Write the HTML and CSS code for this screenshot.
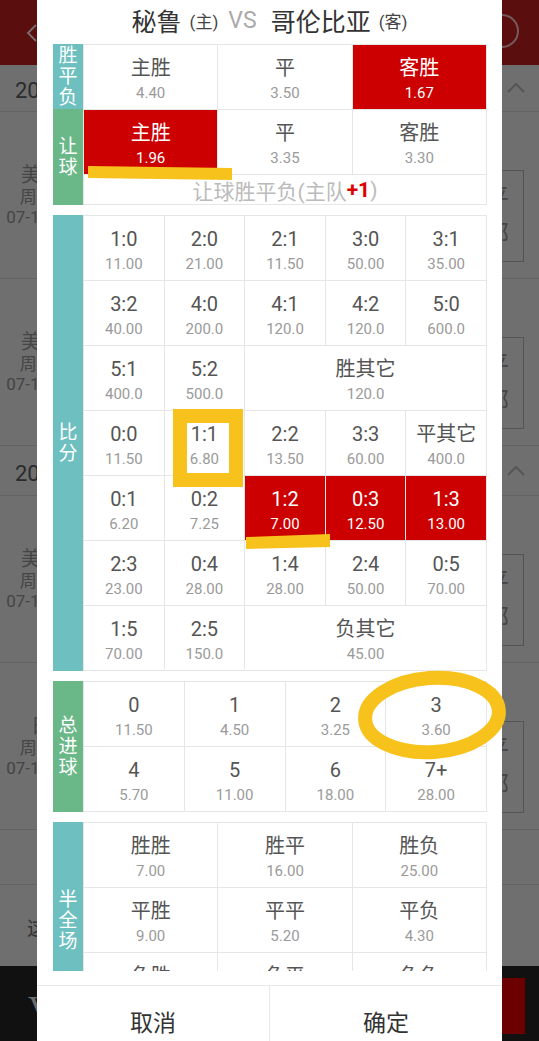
FILE: index.html
```html
<!DOCTYPE html>
<html lang="zh-CN">
<head>
  <meta charset="UTF-8" />
  <meta name="viewport" content="width=device-width, initial-scale=1.0"/>
  <title>投注选项</title>
  <link rel="stylesheet" href="styles.css">
</head>
<body>
  <div class="screen">
    <!-- page behind the dialog -->
    <div class="app">
      <div class="topbar">
        <svg class="back" width="12" height="18" viewBox="0 0 12 18"><path d="M10 1 L2 9 L10 17" fill="none" stroke="#f3d6d6" stroke-width="2"/></svg>
        <span class="top-circle"></span>
      </div>
      <div class="group">
        <span>2018-07-13 星期五 4场比赛可投</span>
        <svg width="18" height="10" viewBox="0 0 18 10"><path d="M1 9 L9 1 L17 9" fill="none" stroke="#aaa" stroke-width="2"/></svg>
      </div>
      <div class="match">
        <div class="info"><span class="lg">美职足</span><span>周五001</span><span>07-14 08:00</span></div>
        <div class="more">平<br>部</div>
      </div>
      <div class="match">
        <div class="info"><span class="lg">美职足</span><span>周五002</span><span>07-14 09:30</span></div>
        <div class="more">平<br>部</div>
      </div>
      <div class="group short">
        <span>2018-07-14 星期六 6场比赛可投</span>
        <svg width="18" height="10" viewBox="0 0 18 10"><path d="M1 9 L9 1 L17 9" fill="none" stroke="#aaa" stroke-width="2"/></svg>
      </div>
      <div class="match">
        <div class="info"><span class="lg">美职足</span><span>周六001</span><span>07-15 07:30</span></div>
        <div class="more">平<br>部</div>
      </div>
      <div class="match">
        <div class="info"><span class="lg">日职</span><span>周六002</span><span>07-15 18:00</span></div>
        <div class="more">平<br>部</div>
      </div>
      <div class="blank"></div>
      <div class="notice">这里是更多比赛</div>
      <div class="bottombar">
        <span class="bar-text">V</span>
        <span class="bar-btn"></span>
      </div>
    </div>
    <div class="mask"></div>

    <!-- dialog -->
    <div class="modal">
      <div class="title">
        <span class="team">秘鲁</span><span class="tag">(主)</span>
        <span class="vs">VS</span>
        <span class="team">哥伦比亚</span><span class="tag">(客)</span>
      </div>
      <div class="scroll">
        <div class="section">
          <div class="side">
            <div class="lbl teal h65"><span>胜平负</span></div>
            <div class="lbl green grow"><span>让球</span></div>
          </div>
          <div class="grid g3 r1">
            <div class="cell"><span class="k">主胜</span><span class="v">4.40</span></div>
            <div class="cell"><span class="k">平</span><span class="v">3.50</span></div>
            <div class="cell on"><span class="k">客胜</span><span class="v">1.67</span></div>
            <div class="cell on"><span class="k">主胜</span><span class="v">1.96</span></div>
            <div class="cell"><span class="k">平</span><span class="v">3.35</span></div>
            <div class="cell"><span class="k">客胜</span><span class="v">3.30</span></div>
            <div class="note">让球胜平负(主队<b>+1</b>)</div>
          </div>
        </div>

        <div class="section">
          <div class="side"><div class="lbl teal grow"><span>比分</span></div></div>
          <div class="grid g5">
            <div class="cell"><span class="k">1:0</span><span class="v">11.00</span></div>
            <div class="cell"><span class="k">2:0</span><span class="v">21.00</span></div>
            <div class="cell"><span class="k">2:1</span><span class="v">11.50</span></div>
            <div class="cell"><span class="k">3:0</span><span class="v">50.00</span></div>
            <div class="cell"><span class="k">3:1</span><span class="v">35.00</span></div>

            <div class="cell"><span class="k">3:2</span><span class="v">40.00</span></div>
            <div class="cell"><span class="k">4:0</span><span class="v">200.0</span></div>
            <div class="cell"><span class="k">4:1</span><span class="v">120.0</span></div>
            <div class="cell"><span class="k">4:2</span><span class="v">120.0</span></div>
            <div class="cell"><span class="k">5:0</span><span class="v">600.0</span></div>

            <div class="cell"><span class="k">5:1</span><span class="v">400.0</span></div>
            <div class="cell"><span class="k">5:2</span><span class="v">500.0</span></div>
            <div class="cell span3"><span class="k">胜其它</span><span class="v">120.0</span></div>

            <div class="cell"><span class="k">0:0</span><span class="v">11.50</span></div>
            <div class="cell"><span class="k">1:1</span><span class="v">6.80</span></div>
            <div class="cell"><span class="k">2:2</span><span class="v">13.50</span></div>
            <div class="cell"><span class="k">3:3</span><span class="v">60.00</span></div>
            <div class="cell"><span class="k">平其它</span><span class="v">400.0</span></div>

            <div class="cell"><span class="k">0:1</span><span class="v">6.20</span></div>
            <div class="cell"><span class="k">0:2</span><span class="v">7.25</span></div>
            <div class="cell on"><span class="k">1:2</span><span class="v">7.00</span></div>
            <div class="cell on"><span class="k">0:3</span><span class="v">12.50</span></div>
            <div class="cell on"><span class="k">1:3</span><span class="v">13.00</span></div>

            <div class="cell"><span class="k">2:3</span><span class="v">23.00</span></div>
            <div class="cell"><span class="k">0:4</span><span class="v">28.00</span></div>
            <div class="cell"><span class="k">1:4</span><span class="v">28.00</span></div>
            <div class="cell"><span class="k">2:4</span><span class="v">50.00</span></div>
            <div class="cell"><span class="k">0:5</span><span class="v">70.00</span></div>

            <div class="cell"><span class="k">1:5</span><span class="v">70.00</span></div>
            <div class="cell"><span class="k">2:5</span><span class="v">150.0</span></div>
            <div class="cell span3"><span class="k">负其它</span><span class="v">45.00</span></div>
          </div>
        </div>

        <div class="section">
          <div class="side"><div class="lbl green grow"><span>总进球</span></div></div>
          <div class="grid g4">
            <div class="cell"><span class="k">0</span><span class="v">11.50</span></div>
            <div class="cell"><span class="k">1</span><span class="v">4.50</span></div>
            <div class="cell"><span class="k">2</span><span class="v">3.25</span></div>
            <div class="cell"><span class="k">3</span><span class="v">3.60</span></div>
            <div class="cell"><span class="k">4</span><span class="v">5.70</span></div>
            <div class="cell"><span class="k">5</span><span class="v">11.00</span></div>
            <div class="cell"><span class="k">6</span><span class="v">18.00</span></div>
            <div class="cell"><span class="k">7+</span><span class="v">28.00</span></div>
          </div>
        </div>

        <div class="section">
          <div class="side"><div class="lbl teal grow"><span>半全场</span></div></div>
          <div class="grid g3">
            <div class="cell"><span class="k">胜胜</span><span class="v">7.00</span></div>
            <div class="cell"><span class="k">胜平</span><span class="v">16.00</span></div>
            <div class="cell"><span class="k">胜负</span><span class="v">25.00</span></div>
            <div class="cell"><span class="k">平胜</span><span class="v">9.00</span></div>
            <div class="cell"><span class="k">平平</span><span class="v">5.20</span></div>
            <div class="cell"><span class="k">平负</span><span class="v">4.30</span></div>
            <div class="cell"><span class="k">负胜</span><span class="v">60.00</span></div>
            <div class="cell"><span class="k">负平</span><span class="v">19.00</span></div>
            <div class="cell"><span class="k">负负</span><span class="v">2.90</span></div>
          </div>
        </div>
      </div>
      <div class="footer">
        <div class="btn">取消</div>
        <div class="btn">确定</div>
      </div>
    </div>

    <!-- hand drawn marks on top -->
    <svg class="marks" width="539" height="1041" viewBox="0 0 539 1041">
      <polygon points="88,166 232,168 232,180 88,178" fill="#f7c21b"/>
      <rect x="180" y="416" width="56" height="64" fill="none" stroke="#f7c21b" stroke-width="14"/>
      <polygon points="246,537 330,534 330,547 246,549" fill="#f7c21b"/>
      <ellipse cx="432" cy="715" rx="67" ry="37" fill="none" stroke="#f7c21b" stroke-width="14" transform="rotate(-4 432 715)"/>
    </svg>
  </div>
</body>
</html>
```

FILE: styles.css
```css
* {
  box-sizing: border-box;
}

body {
  margin: 0;
  font-family: Roboto, "Noto Sans CJK SC", sans-serif;
}

.screen {
  position: relative;
  width: 539px;
  height: 1041px;
  overflow: hidden;
  background-color: #dedede;
}

/* background page */
.app {
  height: 100%;
  display: flex;
  flex-direction: column;
}

.topbar {
  flex: 0 0 65px;
  background-color: #b41c1c;
  display: flex;
  align-items: center;
  justify-content: space-between;
  padding-left: 26px;
  padding-right: 20px;
}

.top-circle {
  width: 34px;
  height: 34px;
  border: 2px solid #e9b5b5;
  border-radius: 50%;
  margin-top: -4px;
}

.group {
  flex: 0 0 47px;
  display: flex;
  align-items: center;
  justify-content: space-between;
  padding: 0 14px 0 15px;
  border-bottom: 1px solid #c4c4c4;
  font-size: 22px;
  color: #575757;
}

.group.short {
  flex-basis: 50px;
}

.match {
  flex: 0 0 167px;
  display: flex;
  justify-content: space-between;
  border-bottom: 1px solid #c4c4c4;
}

.info {
  width: 102px;
  display: flex;
  flex-direction: column;
  align-items: center;
  justify-content: center;
  color: #8a8a8a;
  font-size: 17px;
  line-height: 20px;
}

.info .lg {
  font-size: 20px;
  line-height: 24px;
}

.more {
  width: 54px;
  height: 92px;
  margin-top: 58px;
  margin-right: 15px;
  border: 1px solid #a8a8a8;
  display: flex;
  align-items: center;
  justify-content: center;
  text-align: center;
  font-size: 24px;
  line-height: 36px;
  color: #8a8a8a;
}

.blank {
  flex: 0 0 55px;
  border-bottom: 1px solid #c4c4c4;
}

.notice {
  flex: 0 0 81px;
  padding-left: 27px;
  padding-top: 28px;
  font-size: 20px;
  color: #666;
}

.bottombar {
  flex: 1;
  background-color: #222;
  display: flex;
  justify-content: space-between;
  align-items: flex-start;
  padding-left: 28px;
  padding-right: 14px;
  padding-top: 12px;
}

.bar-text {
  font-family: "Liberation Serif", serif;
  font-size: 36px;
  color: #d8d8d8;
  margin-top: 10px;
}

.bar-btn {
  width: 60px;
  height: 56px;
  background-color: #d80000;
}

.mask {
  position: absolute;
  inset: 0;
  background-color: rgba(0, 0, 0, 0.5);
}

/* dialog */
.modal {
  position: absolute;
  top: 0;
  left: 37px;
  width: 465px;
  height: 1041px;
  background-color: #fff;
  display: flex;
  flex-direction: column;
  overflow: hidden;
}

.title {
  flex: 0 0 44px;
  display: flex;
  align-items: center;
  justify-content: center;
  padding-bottom: 4px;
  color: #333;
}

.team {
  font-size: 25px;
}

.tag {
  font-size: 17px;
  margin-left: 8px;
  color: #444;
}

.vs {
  font-size: 23px;
  color: #aaa;
  margin: 0 14px 0 10px;
}

.scroll {
  flex: 0 0 927px;
  overflow: hidden;
  padding: 0 15px 0 16px;
}

.section {
  display: flex;
  margin-bottom: 10px;
}

.side {
  width: 30px;
  display: flex;
  flex-direction: column;
}

.lbl {
  display: flex;
  align-items: center;
  justify-content: center;
  color: #fff;
  font-size: 19px;
  line-height: 21px;
}

.lbl span {
  width: 1em;
  text-align: center;
}

.lbl.teal {
  background-color: #6dbfc0;
}

.lbl.green {
  background-color: #6ab787;
}

.h65 {
  flex: 0 0 65px;
}

.grow {
  flex: 1;
}

.grid {
  flex: 1;
  display: grid;
  gap: 1px;
  grid-auto-rows: 64px;
  background-color: #e6e6e6;
  border: 1px solid #e6e6e6;
}

.g3 {
  grid-template-columns: repeat(3, 1fr);
}

.g4 {
  grid-template-columns: repeat(4, 1fr);
}

.g5 {
  grid-template-columns: repeat(5, 1fr);
}

.r1 {
  grid-template-rows: 64px 64px 29px;
}

.cell {
  background-color: #fff;
  display: flex;
  flex-direction: column;
  align-items: center;
  justify-content: center;
  gap: 4px;
  padding-top: 5px;
}

.cell .k {
  font-size: 20px;
  line-height: 22px;
  color: #555;
}

.cell .v {
  font-size: 15px;
  line-height: 20px;
  color: #9a9a9a;
}

.cell.on {
  background-color: #cc0000;
}

.cell.on .k, .cell.on .v {
  color: #fff;
}

.span3 {
  grid-column: span 3;
}

.note {
  grid-column: span 3;
  background-color: #fff;
  display: flex;
  align-items: center;
  justify-content: center;
  font-size: 21px;
  color: #bbb;
}

.note b {
  color: #dd0000;
  font-weight: bold;
}

.footer {
  margin-top: 14px;
  border-top: 1px solid #e8e8e8;
  display: flex;
}

.btn {
  flex: 1;
  height: 70px;
  display: flex;
  align-items: center;
  justify-content: center;
  font-size: 23px;
  color: #333;
}

.btn + .btn {
  border-left: 1px solid #e8e8e8;
}

.marks {
  position: absolute;
  top: 0;
  left: 0;
  pointer-events: none;
}
```
